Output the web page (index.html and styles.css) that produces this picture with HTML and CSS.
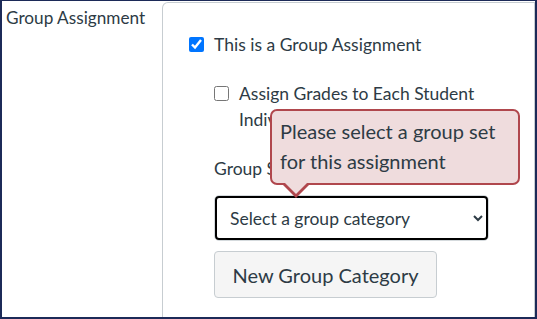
FILE: index.html
```html
<!DOCTYPE html>
<html lang="en">
<head>
  <meta charset="UTF-8">
  <title>Group Assignment</title>
  <link rel="stylesheet" href="styles.css">
</head>
<body>
  <div class="frame">
    <div class="label-col">Group Assignment</div>
    <div class="panel">
      <label class="check-row">
        <input type="checkbox" class="check" checked>
        <span>This is a Group Assignment</span>
      </label>
      <div class="group-options">
        <label class="check-row sub">
          <input type="checkbox" class="check">
          <span>Assign Grades to Each Student Individually</span>
        </label>
        <div class="field-label">Group Set</div>
        <div class="select-wrap">
          <select class="group-select">
            <option>Select a group category</option>
          </select>
        </div>
        <button class="btn">New Group Category</button>

        <!-- error tooltip -->
        <div class="error-tip">
          Please select a group set for this assignment
        </div>
      </div>
    </div>
  </div>
</body>
</html>
```

FILE: styles.css
```css
body {
  margin: 0;
  padding: 0;
  font-family: Lato, "Noto Sans", sans-serif;
  color: #2d3b45;
  background: #fff;
}

.frame {
  width: 537px;
  height: 319px;
  box-sizing: border-box;
  border: 2px solid #1c2a58;
  border-top-width: 1px;
  display: flex;
  overflow: hidden;
}

.label-col {
  width: 160px;
  padding: 7px 0 0 4px;
  box-sizing: border-box;
  font-size: 17.2px;
  line-height: 20px;
}

.panel {
  flex: 1;
  margin-top: 1px;
  border: 1px solid #c7cdd1;
  border-bottom: none;
  border-top-left-radius: 6px;
  padding: 29px 0 0 26px;
  position: relative;
}

.check-row {
  display: flex;
  align-items: flex-start;
  gap: 10px;
  font-size: 17.5px;
  line-height: 26px;
}

.check {
  width: 15px;
  height: 15px;
  margin: 5px 0 0 0;
  flex-shrink: 0;
}

.group-options {
  padding: 23px 0 0 25px;
  position: relative;
}

.check-row.sub {
  width: 280px;
}

.field-label {
  font-size: 17.5px;
  line-height: 20px;
  margin-top: 26px;
}

.select-wrap {
  margin-top: 16px;
  width: 273px;
  border: 1px solid #d5dadd;
  border-radius: 5px;
}

.group-select {
  display: block;
  width: 100%;
  height: 44px;
  border: 2px solid #000;
  border-radius: 4px;
  background: #fff;
  font-family: Lato, sans-serif;
  font-size: 17.5px;
  color: #2d3b45;
  padding: 0 9px;
  outline: none;
}

.btn {
  margin-top: 10px;
  width: 223px;
  height: 47px;
  background: #f5f5f5;
  border: 1px solid #c7cdd1;
  border-radius: 4px;
  font-family: Lato, sans-serif;
  font-size: 20px;
  color: #2d3b45;
}

.error-tip {
  position: absolute;
  left: 81px;
  top: 51px;
  width: 250px;
  height: 76px;
  box-sizing: border-box;
  padding: 5px 8px 0 8px;
  background: #efdcdd;
  border: 2px solid #b0474d;
  border-radius: 7px;
  font-size: 20px;
  line-height: 30px;
  color: #2d3b45;
}

.error-tip::before,
.error-tip::after {
  content: "";
  position: absolute;
  left: 10px;
  border-style: solid;
  border-color: transparent;
}

.error-tip::before {
  bottom: -15px;
  border-width: 14px 14px 0 14px;
  border-top-color: #b0474d;
}

.error-tip::after {
  bottom: -11px;
  left: 12px;
  border-width: 12px 12px 0 12px;
  border-top-color: #efdcdd;
}
```
